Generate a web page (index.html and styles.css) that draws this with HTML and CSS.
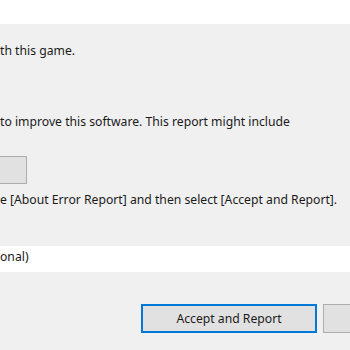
FILE: index.html
```html
<!DOCTYPE html>
<html lang="en">
<head>
    <meta charset="UTF-8">
    <title>Error Report</title>
    <link rel="stylesheet" href="styles.css">
</head>
<body>
    <div class="top"></div>
    <div class="dialog">
        <p class="line first">th this game.</p>
        <p class="line second">to improve this software. This report might include</p>
        <div class="about"><button class="btn small"></button></div>
        <p class="line third">e [About Error Report] and then select [Accept and Report].</p>
        <div class="field">onal)</div>
        <div class="actions">
            <button class="btn main">Accept and Report</button>
            <button class="btn"></button>
        </div>
    </div>
</body>
</html>
```

FILE: styles.css
```css
*{
    margin:0;
    padding:0;
    box-sizing:border-box;
}
body{
    width:350px;
    height:350px;
    overflow:hidden;
    background:#f0f0f0;
    font-family:"Noto Sans","Open Sans",sans-serif;
    font-size:12.2px;
    color:#1a1a1a;
}
.top{
    height:24px;
    background:#fff;
}
.line{
    line-height:16px;
    white-space:nowrap;
}
.first{
    margin-top:19px;
}
.second{
    margin-top:55px;
}
.about{
    margin-top:26px;
    display:flex;
}
.btn{
    height:29px;
    width:27px;
    background:#e1e1e1;
    border:1px solid #adadad;
    font-family:inherit;
    font-size:12.2px;
    color:#1a1a1a;
}
.small{
    height:28px;
    border-left:none;
}
.third{
    margin-top:8px;
}
.field{
    margin-top:38px;
    height:26px;
    line-height:22px;
    background:#fff;
    white-space:nowrap;
}
.actions{
    margin-top:32px;
    display:flex;
    gap:6px;
    padding-left:141px;
}
.main{
    width:176px;
    border:2px solid #0078d7;
}
.actions .btn:last-child{
    flex:1;
    border-right:none;
}
```
